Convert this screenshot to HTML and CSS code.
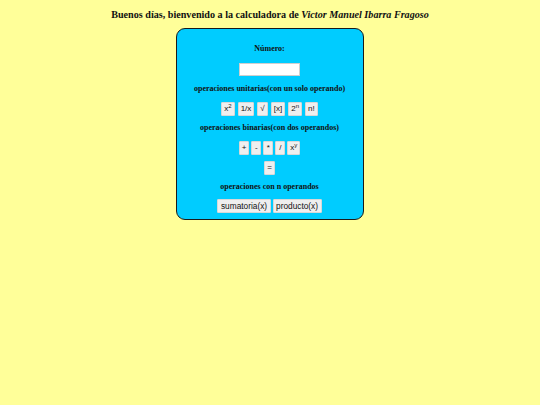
FILE: index.html
```html
<!DOCTYPE html>
<html>
<head>
<meta charset="utf-8">
<link rel="stylesheet" href="styles.css">
</head>
<body>
<h1 class="title">Buenos días, bienvenido a la calculadora de <i>Victor Manuel Ibarra Fragoso</i></h1>
<div class="calc">
  <p class="label">Número:</p>
  <div class="row r-input"><input class="num" type="text"></div>
  <p class="label l-unit">operaciones unitarias(con un solo operando)</p>
  <div class="row r-unit">
    <button class="btn">x<sup>2</sup></button>
    <button class="btn">1/x</button>
    <button class="btn">√</button>
    <button class="btn">[x]</button>
    <button class="btn">2<sup>n</sup></button>
    <button class="btn">n!</button>
  </div>
  <p class="label l-bin">operaciones binarias(con dos operandos)</p>
  <div class="row r-bin">
    <button class="btn">+</button>
    <button class="btn">-</button>
    <button class="btn">*</button>
    <button class="btn">/</button>
    <button class="btn">x<sup>y</sup></button>
  </div>
  <div class="row r-eq"><button class="btn">=</button></div>
  <p class="label l-n">operaciones con n operandos</p>
  <div class="row r-n">
    <button class="btn btn-wide">sumatoria(x)</button>
    <button class="btn btn-wide">producto(x)</button>
  </div>
</div>
</body>
</html>
```
FILE: styles.css
```css
html, body { margin: 0; padding: 0; }
body {
  background: #ffff99;
  font-family: "Liberation Serif", "Times New Roman", serif;
  width: 540px;
  height: 405px;
  display: flex;
  flex-direction: column;
  align-items: center;
}
.title {
  font-size: 10.15px;
  font-weight: bold;
  margin: 9px 0 0 0;
  line-height: 12px;
  text-align: center;
  color: #111;
}
.calc {
  margin-top: 7px;
  margin-left: -1px;
  width: 188px;
  height: 192px;
  box-sizing: border-box;
  background: #00ccff;
  border: 1.3px solid #1a1a1a;
  border-radius: 9px;
  display: flex;
  flex-direction: column;
  align-items: center;
  padding-top: 15px;
}
.label {
  font-size: 8px;
  font-weight: bold;
  margin: 0;
  line-height: 10px;
  color: #111;
}
.row {
  display: flex;
  justify-content: center;
  gap: 3px;
}
.r-input { margin-top: 9px; }
.num {
  width: 61px;
  height: 13px;
  box-sizing: border-box;
  border: 1px solid #cfcfcf;
  background: #fff;
  padding: 0;
  margin: 0;
}
.l-unit { margin-top: 8px; }
.r-unit { margin-top: 8px; }
.l-bin { margin-top: 7px; }
.r-bin { margin-top: 8px; gap: 2px; }
.r-eq { margin-top: 6px; }
.l-n { margin-top: 7px; }
.r-n { margin-top: 7px; gap: 2px; }
.btn {
  font-family: "Liberation Sans", Arial, sans-serif;
  font-size: 8px;
  height: 14px;
  min-width: 10px;
  box-sizing: border-box;
  padding: 0 2px;
  margin: 0;
  background: #efefef;
  border: 1px solid #d8d8d8;
  border-radius: 1px;
  color: #111;
  line-height: 12px;
}
.btn-wide { font-size: 8.3px; padding: 0 2.5px; }
.btn sup { font-size: 6px; line-height: 0; vertical-align: 3px; }
```
